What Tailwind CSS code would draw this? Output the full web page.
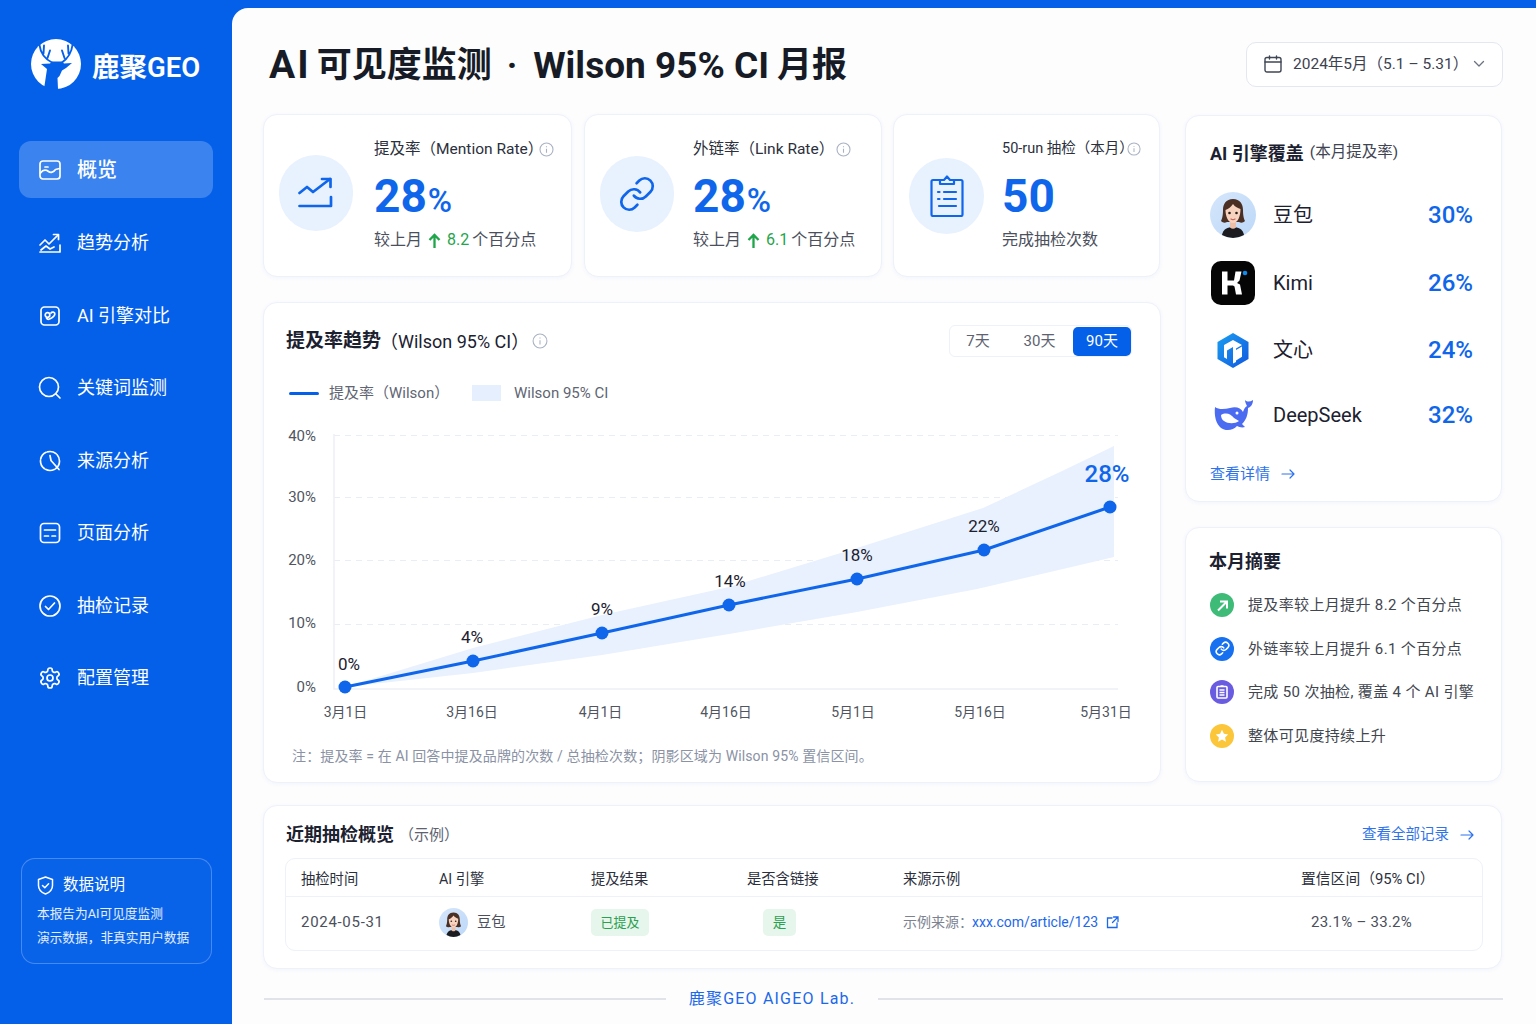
<!DOCTYPE html>
<html lang="zh-CN">
<head>
<meta charset="utf-8">
<title>AI可见度监测</title>
<script src="https://cdn.jsdelivr.net/npm/@tailwindcss/browser@4"></script>
</head>
<body class="m-0">
<svg width="0" height="0" class="absolute">
  <defs>
    <linearGradient id="av" x1="0" y1="0" x2="1" y2="1"><stop offset="0" stop-color="#d5e6fb"/><stop offset="1" stop-color="#bcd8f8"/></linearGradient>
    <linearGradient id="wx" x1="0" y1="0" x2="1" y2="1"><stop offset="0" stop-color="#1aa0f0"/><stop offset="1" stop-color="#1257e0"/></linearGradient>
    <symbol id="avatar" viewBox="0 0 46 46">
      <circle cx="23" cy="23" r="23" fill="url(#av)"/>
      <path d="M12 43c1-6 6-8 11-8s10 2 11 8a23 23 0 0 1-22 0z" fill="#1c1b1f"/>
      <path d="M20 29h6v6.500c-2 1.800-4 1.800-6 0z" fill="#eebfa8"/>
      <path d="M23 7c-7 0-10 5-10 11 0 6-1 9-2 11 2 2 4 2 6 1h12c2 1 4 1 6-1-1-2-2-5-2-11 0-6-3-11-10-11z" fill="#4a2f25"/>
      <path d="M23 12c2 3 5 4 7.500 5 0 7-2.500 14-7.500 14s-7.500-7-7.500-13c3-1 5.500-3 7.500-6z" fill="#f6d2bf"/>
      <circle cx="19.500" cy="21" r="1.300" fill="#2b1a14"/><circle cx="26.500" cy="21" r="1.300" fill="#2b1a14"/>
      <path d="M21 27c1.300.8 2.700.8 4 0" fill="none" stroke="#c8655c" stroke-width="1.200" stroke-linecap="round"/>
    </symbol>
  </defs>
</svg>

<div class="flex w-[1536px] h-[1024px] overflow-hidden bg-[#0560e9] font-[Roboto,'Noto_Sans_CJK_SC',sans-serif] text-[#1c2130]">

  <!-- Sidebar -->
  <aside class="w-[232px] shrink-0 flex flex-col pl-[19px] text-white">
    <div class="flex items-center gap-[11px] pl-[12px] pt-[39px] h-[89px]">
      <svg width="50" height="50" viewBox="0 0 50 50" class="shrink-0">
        <circle cx="25" cy="25" r="25" fill="#fff"/>
        <path d="M13 50 L16 30 L10 25 L19 24.500 L21 22.500 L31 22.500 L33 24.500 L41 24 L35 29 L31 31.500 L28.500 37 L26.500 39 L27 50Z" fill="#0560e9"/>
        <path d="M8.500 6C9.500 14 14 20 21 23.500M41.500 6C40.500 14 36 20 31 23.500M12.500 14.500L13 6.500M16.500 19L19 11.500M37.500 14.500L37 6.500M33.500 19L31 11.500" stroke="#0560e9" stroke-width="1.900" fill="none" stroke-linecap="round"/>
      </svg>
      <span class="mt-[8px] text-[27.500px] font-semibold leading-none whitespace-nowrap">鹿聚GEO</span>
    </div>

    <nav class="mt-[52px] flex flex-col gap-[15.500px] w-[194px] text-[18px] leading-none">
      <a class="mb-[1px] h-[57px] flex items-center gap-[15px] pl-[19px] rounded-xl bg-white/22 font-medium">
        <svg width="24" height="24" viewBox="0 0 24 24" fill="none" stroke="#fff" stroke-width="1.700" stroke-linecap="round" stroke-linejoin="round"><rect x="2" y="3" width="20" height="18" rx="3"/><path d="M2.500 15c3-4 6-3 8-1.500s5 1 7-2l4-1"/><path d="M7 9h3"/></svg>
        <span class="text-[20px]">概览</span>
      </a>
      <a class="h-[57px] flex items-center gap-[15px] pl-[19px]">
        <svg width="24" height="24" viewBox="0 0 24 24" fill="none" stroke="#fff" stroke-width="1.700" stroke-linecap="round" stroke-linejoin="round"><path d="M2 14l5-5 4 4 9-9"/><path d="M15.500 3.500H20.500V8.500"/><path d="M2 21h20v-7"/><path d="M3 19l5-4 4 3 4-2"/></svg>
        <span>趋势分析</span>
      </a>
      <a class="h-[57px] flex items-center gap-[15px] pl-[19px]">
        <svg width="24" height="24" viewBox="0 0 24 24" fill="none" stroke="#fff" stroke-width="1.700" stroke-linecap="round" stroke-linejoin="round"><rect x="3" y="3" width="18" height="18" rx="3.500"/><circle cx="9.500" cy="11" r="2.300"/><path d="M13 9c1-1.500 4-1 3.800 1 0 2-3 4-5.300 5-1.200.5-2.500 0-3-1"/></svg>
        <span>AI 引擎对比</span>
      </a>
      <a class="h-[57px] flex items-center gap-[15px] pl-[19px]">
        <svg width="24" height="24" viewBox="0 0 24 24" fill="none" stroke="#fff" stroke-width="1.700" stroke-linecap="round"><circle cx="11" cy="11" r="9.500"/><path d="M18 18l4 4"/></svg>
        <span>关键词监测</span>
      </a>
      <a class="h-[57px] flex items-center gap-[15px] pl-[19px]">
        <svg width="24" height="24" viewBox="0 0 24 24" fill="none" stroke="#fff" stroke-width="1.700" stroke-linecap="round"><circle cx="12" cy="12" r="9.500" stroke-dasharray="9 1.500"/><path d="M13 11.500l8 9M13 11.500l-1-5"/></svg>
        <span>来源分析</span>
      </a>
      <a class="h-[57px] flex items-center gap-[15px] pl-[19px]">
        <svg width="24" height="24" viewBox="0 0 24 24" fill="none" stroke="#fff" stroke-width="1.700" stroke-linecap="round"><rect x="2.500" y="2.500" width="19" height="19" rx="3.500"/><path d="M6.500 9h11M6.500 15h4M14 15h3.500"/></svg>
        <span>页面分析</span>
      </a>
      <a class="h-[57px] flex items-center gap-[15px] pl-[19px]">
        <svg width="24" height="24" viewBox="0 0 24 24" fill="none" stroke="#fff" stroke-width="1.700" stroke-linecap="round" stroke-linejoin="round"><circle cx="12" cy="12" r="10"/><path d="M7.500 12.500l3 3 6-6.500"/></svg>
        <span>抽检记录</span>
      </a>
      <a class="h-[57px] flex items-center gap-[15px] pl-[19px]">
        <svg width="24" height="24" viewBox="0 0 24 24" fill="none" stroke="#fff" stroke-width="1.700" stroke-linecap="round" stroke-linejoin="round"><path d="M12.220 2h-.44a2 2 0 0 0-2 2v.18a2 2 0 0 1-1 1.730l-.43.25a2 2 0 0 1-2 0l-.15-.08a2 2 0 0 0-2.730.73l-.22.38a2 2 0 0 0 .73 2.730l.15.1a2 2 0 0 1 1 1.720v.51a2 2 0 0 1-1 1.740l-.15.09a2 2 0 0 0-.73 2.730l.22.38a2 2 0 0 0 2.730.73l.15-.08a2 2 0 0 1 2 0l.43.25a2 2 0 0 1 1 1.730V20a2 2 0 0 0 2 2h.44a2 2 0 0 0 2-2v-.18a2 2 0 0 1 1-1.730l.43-.25a2 2 0 0 1 2 0l.15.08a2 2 0 0 0 2.730-.73l.22-.39a2 2 0 0 0-.73-2.730l-.15-.08a2 2 0 0 1-1-1.740v-.5a2 2 0 0 1 1-1.740l.15-.09a2 2 0 0 0 .73-2.730l-.22-.38a2 2 0 0 0-2.730-.73l-.15.08a2 2 0 0 1-2 0l-.43-.25a2 2 0 0 1-1-1.730V4a2 2 0 0 0-2-2z"/><circle cx="12" cy="12" r="3"/></svg>
        <span>配置管理</span>
      </a>
    </nav>

    <div class="mt-auto mb-[60px] ml-[2px] w-[191px] h-[106px] rounded-[14px] border border-white/25 bg-white/[0.02] pl-[15px] pt-[16px]">
      <div class="flex items-center gap-[9px] text-[15.500px] leading-[20px]">
        <svg width="17" height="19" viewBox="0 0 17 19" fill="none" stroke="#fff" stroke-width="1.500" stroke-linecap="round" stroke-linejoin="round"><path d="M8.500 1l7 2.500v6c0 4-3 7-7 8.500-4-1.500-7-4.500-7-8.500v-6z"/><path d="M5.500 9.500l2.300 2.300 3.800-4"/></svg>
        <span>数据说明</span>
      </div>
      <p class="mt-[7px] text-[12.700px] leading-[24px] text-white/90 whitespace-nowrap">本报告为AI可见度监测<br>演示数据，非真实用户数据</p>
    </div>
  </aside>

  <!-- Main -->
  <main class="w-[1304px] mt-2 rounded-tl-[16px] bg-[#fdfdfe] pl-[31px] pr-[33px] pt-[34px]">
    <header class="h-[44px] flex items-center justify-between">
      <h1 class="ml-[6px] mt-[2px] text-[35px] font-bold leading-none whitespace-nowrap text-[#171b26] flex items-center"><span class="tracking-[2px] text-[39px] mr-[6px]">AI</span><span>可见度监测</span><span class="mx-[15px]">·</span><span class="ml-[1px] text-[37px]">Wilson 95% CI</span><span class="ml-[8px]">月报</span></h1>
      <button class="w-[257px] h-[45px] rounded-[10px] border border-[#e3e7ef] bg-white flex items-center pl-[17px] text-[15.500px] text-[#3c4250] whitespace-nowrap">
        <svg width="18" height="18" viewBox="0 0 18 18" fill="none" stroke="#3f4654" stroke-width="1.400" stroke-linecap="round"><rect x="1" y="2.500" width="16" height="14.500" rx="2"/><path d="M1 7h16M5.500 1v3M12.500 1v3"/></svg>
        <span class="ml-[11px] mt-[1px]">2024年5月（5.1 – 5.31）</span>
        <svg class="ml-auto mr-[17px]" width="12" height="8" viewBox="0 0 12 8" fill="none" stroke="#6b7280" stroke-width="1.300" stroke-linecap="round" stroke-linejoin="round"><path d="M1.500 1.500L6 6l4.500-4.500"/></svg>
      </button>
    </header>

    <div class="flex gap-[24px] mt-[28px]">
      <!-- Left column -->
      <div class="w-[898px] shrink-0 flex flex-col">
        <div class="flex h-[163px]">
          <!-- KPI 1 -->
          <section class="w-[309px] rounded-[14px] border border-[#edf1f9] bg-white shadow-[0_1px_4px_rgba(30,70,160,0.05)] flex pl-[15px]">
            <div class="w-[74px] h-[76px] rounded-full bg-[#e8f1fe] flex items-center justify-center mt-[40px] shrink-0">
              <svg width="36" height="32" viewBox="0 0 36 32" fill="none" stroke="#0f66ea" stroke-width="2.700" stroke-linecap="round" stroke-linejoin="round"><path d="M1.500 16l7.500-6 6 5L32 2"/><path d="M24 2h8.500v8"/><path d="M1.500 29H33v-9"/></svg>
            </div>
            <div class="ml-[21px] pt-[24px]">
              <div class="flex items-center text-[15.500px] leading-[20px] text-[#2b303c] whitespace-nowrap"><span>提及率（Mention Rate）</span>
                <svg class="ml-[-4px]" width="15" height="15" viewBox="0 0 15 15" fill="none" stroke="#a9b2c3" stroke-width="1.100"><circle cx="7.500" cy="7.500" r="6.500"/><path d="M7.500 6.800v4M7.500 4.200v1"/></svg>
              </div>
              <div class="mt-[14px] h-[50px] flex items-baseline text-[#0f66ea] leading-none whitespace-nowrap"><span class="text-[46px] font-bold">28</span><span class="text-[33px] font-medium ml-[1px]">%</span></div>
              <div class="mt-[7px] text-[16px] leading-[20px] text-[#4b505c] whitespace-nowrap flex items-center">较上月<svg class="mx-[6px]" width="13" height="15" viewBox="0 0 13 15" fill="none" stroke="#1fa54a" stroke-width="2.300" stroke-linejoin="miter"><path d="M6.500 15V2M1.500 7l5-5 5 5"/></svg><span class="text-[#1fa54a]">8.2</span><span class="ml-[3px]">个百分点</span></div>
            </div>
          </section>
          <!-- KPI 2 -->
          <section class="ml-[12px] w-[298px] rounded-[14px] border border-[#edf1f9] bg-white shadow-[0_1px_4px_rgba(30,70,160,0.05)] flex pl-[15px]">
            <div class="w-[74px] h-[76px] rounded-full bg-[#e8f1fe] flex items-center justify-center mt-[41px] shrink-0">
              <svg width="38" height="40" viewBox="0 0 24 24" fill="none" stroke="#0f66ea" stroke-width="1.700" stroke-linecap="round" stroke-linejoin="round"><path d="M10 13a5 5 0 0 0 7.540.54l3-3a5 5 0 0 0-7.070-7.070l-1.720 1.710"/><path d="M14 11a5 5 0 0 0-7.540-.54l-3 3a5 5 0 0 0 7.070 7.070l1.710-1.710"/></svg>
            </div>
            <div class="ml-[19px] pt-[24px]">
              <div class="flex items-center text-[15.500px] leading-[20px] text-[#2b303c] whitespace-nowrap"><span>外链率（Link Rate）</span>
                <svg class="ml-[2px]" width="15" height="15" viewBox="0 0 15 15" fill="none" stroke="#a9b2c3" stroke-width="1.100"><circle cx="7.500" cy="7.500" r="6.500"/><path d="M7.500 6.800v4M7.500 4.200v1"/></svg>
              </div>
              <div class="mt-[14px] h-[50px] flex items-baseline text-[#0f66ea] leading-none whitespace-nowrap"><span class="text-[46px] font-bold">28</span><span class="text-[33px] font-medium ml-[1px]">%</span></div>
              <div class="mt-[7px] text-[16px] leading-[20px] text-[#4b505c] whitespace-nowrap flex items-center">较上月<svg class="mx-[6px]" width="13" height="15" viewBox="0 0 13 15" fill="none" stroke="#1fa54a" stroke-width="2.300"><path d="M6.500 15V2M1.500 7l5-5 5 5"/></svg><span class="text-[#1fa54a]">6.1</span><span class="ml-[3px]">个百分点</span></div>
            </div>
          </section>
          <!-- KPI 3 -->
          <section class="ml-[11px] w-[267px] rounded-[14px] border border-[#edf1f9] bg-white shadow-[0_1px_4px_rgba(30,70,160,0.05)] flex pl-[15px]">
            <div class="w-[75px] h-[76px] rounded-full bg-[#e8f1fe] flex items-center justify-center mt-[43px] shrink-0">
              <svg width="34" height="42" viewBox="0 0 34 42" fill="none" stroke="#0f66ea" stroke-width="2.200" stroke-linecap="round" stroke-linejoin="round"><path d="M10 5H3a1.500 1.500 0 0 0-1.500 1.500v33A1.500 1.500 0 0 0 3 41h28a1.500 1.500 0 0 0 1.500-1.500v-33A1.500 1.500 0 0 0 31 5h-7"/><path d="M10 9V5h4l3-3.500L20 5h4v4z"/><path d="M14 17h12M8 17h1.500M8 24h1.500M14 24h12M9 31h17"/></svg>
            </div>
            <div class="ml-[18px] pt-[24px]">
              <div class="flex items-center text-[14.500px] leading-[20px] text-[#2b303c] whitespace-nowrap"><span>50-run 抽检（本月）</span>
                <svg class="ml-[-7px]" width="14" height="14" viewBox="0 0 15 15" fill="none" stroke="#a9b2c3" stroke-width="1.100"><circle cx="7.500" cy="7.500" r="6.500"/><path d="M7.500 6.800v4M7.500 4.200v1"/></svg>
              </div>
              <div class="mt-[14px] h-[50px] text-[46px] font-bold text-[#0f66ea] leading-none">50</div>
              <div class="mt-[7px] text-[16px] leading-[20px] text-[#4b505c] whitespace-nowrap">完成抽检次数</div>
            </div>
          </section>
        </div>

        <!-- Chart card -->
        <section class="mt-[25px] h-[481px] rounded-[14px] border border-[#edf1f9] bg-white shadow-[0_1px_4px_rgba(30,70,160,0.05)] flex flex-col pl-[22px] pr-[28px]">
          <div class="flex items-center justify-between mt-[22px] h-[32px]">
            <div class="flex items-center text-[18px] text-[#1c2130] whitespace-nowrap">
              <span class="text-[19px] font-bold">提及率趋势</span><span class="ml-[-1px]">（Wilson 95% CI）</span>
              <svg class="ml-[3px]" width="16" height="16" viewBox="0 0 15 15" fill="none" stroke="#a9b2c3" stroke-width="1"><circle cx="7.500" cy="7.500" r="6.500"/><path d="M7.500 6.800v4M7.500 4.200v1"/></svg>
            </div>
            <div class="w-[183px] h-[32px] rounded-[6px] border border-[#eef1f8] flex items-center text-[15px] text-[#5c6270]">
              <span class="w-[56px] text-center">7天</span><span class="w-[67px] text-center">30天</span>
              <span class="w-[58px] h-[29px] rounded-[5px] bg-[#0560e9] text-white flex items-center justify-center">90天</span>
            </div>
          </div>
          <div class="flex items-center mt-[26px] h-[20px] text-[15px] text-[#5f6573] whitespace-nowrap">
            <span class="ml-[3px] w-[30px] h-[3px] rounded-full bg-[#0560e9]"></span>
            <span class="ml-[10px] w-[143px]">提及率（Wilson）</span>
            <span class="w-[29px] h-[16px] bg-[#e5effd]"></span>
            <span class="ml-[13px]">Wilson 95% CI</span>
          </div>
          <!-- svg coordinates = page coordinates minus (285,421) -->
          <svg width="860" height="310" viewBox="285 421 860 310" class="mt-[18px] -ml-[1px] overflow-visible">
            <g stroke="#e9edf6" stroke-width="1" stroke-dasharray="6 5">
              <path d="M334 435.500H1118M334 497.500H1118M334 560.500H1118M334 624.500H1118"/>
            </g>
            <path d="M334 434V689H1118" fill="none" stroke="#edf0f7" stroke-width="1.500"/>
            <path d="M345 687L473 648 602 615 729 587 857 548 983 508 1060 472 1114 446V557L977 589 857 612 729 634 602 655 473 673z" fill="#e9f1fe"/>
            <path d="M345 687L473 661 602 633 729 605 857 579 984 550 1110 507" fill="none" stroke="#0f66ea" stroke-width="3" stroke-linejoin="round"/>
            <g fill="#0f66ea">
              <circle cx="345" cy="687" r="6.500"/><circle cx="473" cy="661" r="6.500"/><circle cx="602" cy="633" r="6.500"/><circle cx="729" cy="605" r="6.500"/><circle cx="857" cy="579" r="6.500"/><circle cx="984" cy="550" r="6.500"/><circle cx="1110" cy="507" r="6.500"/>
            </g>
            <g class="text-[15px] fill-[#50555f]" text-anchor="end">
              <text x="316" y="441">40%</text><text x="316" y="502">30%</text><text x="316" y="565">20%</text><text x="316" y="628">10%</text><text x="316" y="692">0%</text>
            </g>
            <g class="text-[14px] fill-[#50555f]" text-anchor="middle">
              <text x="345.500" y="717">3月1日</text><text x="472" y="717">3月16日</text><text x="600.500" y="717">4月1日</text><text x="726" y="717">4月16日</text><text x="853" y="717">5月1日</text><text x="980" y="717">5月16日</text><text x="1106" y="717">5月31日</text>
            </g>
            <g class="text-[17px] fill-[#1c2130]" text-anchor="middle">
              <text x="349" y="670">0%</text><text x="472" y="643">4%</text><text x="602" y="615">9%</text><text x="730" y="587">14%</text><text x="857" y="561">18%</text><text x="984" y="532">22%</text>
            </g>
            <text x="1107" y="482" text-anchor="middle" class="text-[24px] font-medium fill-[#0f66ea]">28%</text>
          </svg>
          <p class="mt-[15px] ml-[6px] text-[14px] tracking-[0.13px] leading-[20px] text-[#8a92a4] whitespace-nowrap">注：提及率 = 在 AI 回答中提及品牌的次数 / 总抽检次数；阴影区域为 Wilson 95% 置信区间。</p>
        </section>
      </div>

      <!-- Right column -->
      <div class="w-[317px] shrink-0 flex flex-col pt-[1px]">
        <section class="h-[387px] rounded-[14px] border border-[#edf1f9] bg-white shadow-[0_1px_4px_rgba(30,70,160,0.05)] pl-[24px] pr-[28px]">
          <div class="mt-[25px] h-[24px] flex items-center whitespace-nowrap"><span class="text-[18px] font-bold text-[#1c2130]">AI 引擎覆盖</span><span class="ml-[6px] text-[15.500px] text-[#3f4552]">(本月提及率)</span></div>
          <div class="mt-[27px] flex flex-col">
            <div class="h-[46px] flex items-center">
              <svg width="46" height="46" class="shrink-0"><use href="#avatar"/></svg>
              <span class="ml-[17px] text-[20px]">豆包</span><span class="ml-auto text-[24px] font-medium text-[#0f66ea]">30%</span>
            </div>
            <div class="mt-[23px] h-[44px] flex items-center">
              <svg width="44" height="44" viewBox="0 0 44 44" class="shrink-0 ml-[1px]"><rect width="44" height="44" rx="10" fill="#050505"/><path d="M11 10.500h5.500v9h6.500l1.500-9h6l-2 9-2.500 2.500 3 1.500 2 10h-6l-1.500-8-1.500-1H16.500v9H11z" fill="#fff"/><circle cx="34" cy="12" r="2.300" fill="#0c8cf0"/></svg>
              <span class="ml-[18px] text-[20px]">Kimi</span><span class="ml-auto text-[24px] font-medium text-[#0f66ea]">26%</span>
            </div>
            <div class="mt-[23px] h-[44px] flex items-center">
              <svg width="46" height="44" viewBox="0 0 46 44" class="shrink-0"><path d="M23 5l15.500 9v17L23 40 7.500 31V14z" fill="url(#wx)"/><path d="M23 12l9 5-6 3.500V34l-3 1.500V19l-6 3.500V31l-3-1.700V17z" fill="#fff"/><path d="M26 22l6-3.500v10.300L26 32.500z" fill="#fff"/></svg>
              <span class="ml-[17px] text-[20px]">文心</span><span class="ml-auto text-[24px] font-medium text-[#0f66ea]">24%</span>
            </div>
            <div class="mt-[21px] h-[44px] flex items-center">
              <svg width="46" height="40" viewBox="0 0 46 40" class="shrink-0"><path d="M5 12C9 15 15 14 20 13 26 11 31 13 33 17 34 14 35 12 37 11 36 9 35 7 35 5 37 7 40 7 43 5 43 9 41 12 38 13 38 20 36 25 32 29L35 32C32 33 29 32 27 31 23 36 15 36 11 33 6 29 4 21 5 12Z" fill="#4b6bf0"/><path d="M11 20C16 17 21 19 24 23L29 26C25 29 18 29 14 26 12 25 11 22 11 20Z" fill="#fff"/><circle cx="27" cy="18" r="1.500" fill="#fff"/></svg>
              <span class="ml-[17px] text-[20px] leading-none">DeepSeek</span><span class="ml-auto text-[24px] font-medium text-[#0f66ea]">32%</span>
            </div>
          </div>
          <a class="mt-[27px] flex items-center text-[15px] text-[#2f73ec] leading-[20px]">查看详情
            <svg class="ml-[11px]" width="14" height="10" viewBox="0 0 14 10" fill="none" stroke="#2f73ec" stroke-width="1.200" stroke-linecap="round" stroke-linejoin="round"><path d="M1 5h12M9 1l4 4-4 4"/></svg>
          </a>
        </section>

        <section class="mt-[25px] h-[255px] rounded-[14px] border border-[#edf1f9] bg-white shadow-[0_1px_4px_rgba(30,70,160,0.05)] pl-[23px]">
          <h2 class="mt-[22px] text-[18px] font-bold leading-[24px] text-[#1c2130]">本月摘要</h2>
          <ul class="mt-[19px] ml-[1px] flex flex-col gap-[19.500px] text-[15px] tracking-[0.35px] leading-[24px] text-[#41464f] whitespace-nowrap">
            <li class="flex items-center gap-[14px]"><span class="w-[24px] h-[24px] rounded-full bg-[#3fbb78] flex items-center justify-center"><svg width="13" height="13" viewBox="0 0 13 13" fill="none" stroke="#fff" stroke-width="2"><path d="M2 11.500l8-8M4 2.500h7v7"/></svg></span>提及率较上月提升 8.2 个百分点</li>
            <li class="flex items-center gap-[14px]"><span class="w-[24px] h-[24px] rounded-full bg-[#1670f0] flex items-center justify-center"><svg width="15" height="15" viewBox="0 0 24 24" fill="none" stroke="#fff" stroke-width="2.500" stroke-linecap="round"><path d="M10 13a5 5 0 0 0 7.540.54l3-3a5 5 0 0 0-7.070-7.070l-1.720 1.710"/><path d="M14 11a5 5 0 0 0-7.540-.54l-3 3a5 5 0 0 0 7.070 7.070l1.710-1.710"/></svg></span>外链率较上月提升 6.1 个百分点</li>
            <li class="flex items-center gap-[14px]"><span class="w-[24px] h-[24px] rounded-full bg-[#6a5ce0] flex items-center justify-center"><svg width="12" height="14" viewBox="0 0 12 14" fill="none" stroke="#fff" stroke-width="1.600"><rect x="1" y="1.500" width="10" height="11.500" rx="1"/><path d="M3.500 5h5M3.500 7.500h5M3.500 10h5M4.500 1h3"/></svg></span>完成 50 次抽检, 覆盖 4 个 AI 引擎</li>
            <li class="flex items-center gap-[14px]"><span class="w-[24px] h-[24px] rounded-full bg-[#fbc63a] flex items-center justify-center"><svg width="14" height="14" viewBox="0 0 14 14" fill="#fff"><path d="M7 .8l1.900 4 4.300.6-3.100 3 .8 4.300L7 10.600l-3.900 2.100.8-4.300-3.100-3 4.300-.6z"/></svg></span>整体可见度持续上升</li>
          </ul>
        </section>
      </div>
    </div>

    <!-- Table card -->
    <section class="mt-[22px] w-[1239px] h-[164px] rounded-[14px] border border-[#edf1f9] bg-white shadow-[0_1px_4px_rgba(30,70,160,0.05)] pl-[21px] pr-[18px]">
      <div class="h-[52px] pt-[5px] flex items-center whitespace-nowrap">
        <span class="ml-[1px] text-[18px] font-bold text-[#1c2130]">近期抽检概览</span>
        <span class="ml-[5px] mt-[1px] text-[15px] text-[#5c6270]">（示例）</span>
        <a class="ml-auto mr-[9px] flex items-center text-[14.500px] text-[#2f73ec]">查看全部记录<svg class="ml-[11px]" width="14" height="10" viewBox="0 0 14 10" fill="none" stroke="#2f73ec" stroke-width="1.200" stroke-linecap="round" stroke-linejoin="round"><path d="M1 5h12M9 1l4 4-4 4"/></svg></a>
      </div>
      <div class="h-[93px] rounded-[10px] border border-[#eef1f8] text-[14.300px] whitespace-nowrap">
        <div class="grid grid-cols-[138px_152px_156px_156px_398px_1fr] items-center h-[38px] pl-[15px] pt-[4px] border-b border-[#eef1f8] text-[#2b303c]">
          <span>抽检时间</span><span>AI 引擎</span><span>提及结果</span><span>是否含链接</span><span>来源示例</span><span class="text-[14.800px]">置信区间（95% CI）</span>
        </div>
        <div class="grid grid-cols-[138px_152px_156px_156px_398px_1fr] items-center h-[51px] pl-[15px] text-[#4b505c]">
          <span class="text-[15px] tracking-[0.7px]">2024-05-31</span>
          <span class="flex items-center gap-[9px]"><svg width="29" height="29" class="shrink-0"><use href="#avatar"/></svg>豆包</span>
          <span><span class="inline-flex items-center justify-center w-[58px] h-[27px] rounded-[5px] bg-[#e7f6ec] text-[#2aa050] text-[13px]">已提及</span></span>
          <span><span class="inline-flex items-center justify-center ml-[16px] w-[33px] h-[27px] rounded-[5px] bg-[#e7f6ec] text-[#2aa050] text-[13.500px]">是</span></span>
          <span class="flex items-center text-[14px] text-[#7c8290]">示例来源：<span class="text-[#1c68ea] ml-[-1px]">xxx.com/article/123</span><svg class="ml-[8px]" width="13" height="13" viewBox="0 0 13 13" fill="none" stroke="#1c68ea" stroke-width="1.300" stroke-linecap="round"><path d="M6 2H1.500v9.500H11V7M7.500 1H12v4.500M12 1L6.500 6.500"/></svg></span>
          <span class="pl-[10px] text-[15px] tracking-[0.25px]">23.1% – 33.2%</span>
        </div>
      </div>
    </section>

    <footer class="mt-[20px] ml-[1px] h-[20px] flex items-center text-[16px] text-[#1c68ea] whitespace-nowrap">
      <span class="w-[402px] h-[2px] bg-[#e1e3ea]"></span>
      <span class="mx-auto tracking-[1.200px]">鹿聚GEO AIGEO Lab.</span>
      <span class="w-[625px] h-[2px] bg-[#e1e3ea]"></span>
    </footer>
  </main>
</div>
</body>
</html>
